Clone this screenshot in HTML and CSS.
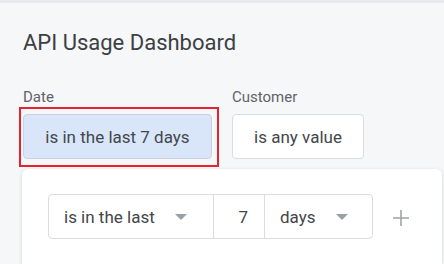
FILE: index.html
```html
<!DOCTYPE html>
<html lang="en">
<head>
    <meta charset="UTF-8">
    <meta name="viewport" content="width=device-width, initial-scale=1.0">
    <title>API Usage Dashboard</title>
    <link rel="stylesheet" href="styles.css">
</head>
<body>
    <div class="topbar"></div>
    <main class="page">
        <h1 class="title">API Usage Dashboard</h1>
        <div class="filters">
            <div class="filter">
                <span class="filter-label">Date</span>
                <button class="chip chip-active">is in the last 7 days</button>
            </div>
            <div class="filter">
                <span class="filter-label">Customer</span>
                <button class="chip">is any value</button>
            </div>
        </div>
        <div class="popup">
            <div class="condition">
                <div class="seg seg-select seg-op">
                    <span>is in the last</span>
                    <span class="caret"></span>
                </div>
                <div class="seg seg-num">7</div>
                <div class="seg seg-select seg-unit">
                    <span>days</span>
                    <span class="caret"></span>
                </div>
            </div>
            <button class="add-btn" aria-label="Add">
                <svg width="16" height="16" viewBox="0 0 16 16">
                    <path d="M8 0v16M0 8h16" stroke="#a0a4a8" stroke-width="1.6" fill="none"/>
                </svg>
            </button>
        </div>
    </main>
</body>
</html>
```

FILE: styles.css
```css
body {
    margin: 0;
    background-color: #f6f7f9;
    font-family: Roboto, "Liberation Sans", Arial, sans-serif;
    color: #3c4043;
    overflow: hidden;
}
.topbar {
    height: 3px;
    background-color: #e8e9ee;
}
.page {
    padding: 27px 0 0 23px;
}
.title {
    margin: 0;
    font-size: 22px;
    line-height: 26px;
    font-weight: 400;
    color: #3c4043;
}
.filters {
    display: flex;
    gap: 20px;
    margin-top: 32px;
}
.filter {
    display: flex;
    flex-direction: column;
    gap: 8px;
}
.filter-label {
    font-size: 15px;
    line-height: 18px;
    color: #5f6368;
}
.chip {
    position: relative;
    height: 45px;
    padding: 0;
    font-family: inherit;
    font-size: 17px;
    color: #43464a;
    background-color: #fff;
    border: 1px solid #dadce0;
    border-radius: 4px;
    width: 132px;
}
.chip-active {
    width: 189px;
    background-color: #d9e6fa;
    border-color: #c8d3e2;
}
/* red highlight frame round the active chip */
.chip-active::after {
    content: "";
    position: absolute;
    top: -8px;
    left: -5px;
    right: -8px;
    bottom: -9px;
    border: 2px solid #e8222c;
}
.popup {
    display: flex;
    align-items: flex-start;
    gap: 20px;
    margin: 10px 0 0 -1px;
    width: 420px;
    height: 95px;
    box-sizing: border-box;
    padding: 25px 0 0 26px;
    background-color: #fff;
    border-radius: 6px 6px 0 0;
    box-shadow: 0 1px 4px rgba(0, 0, 0, 0.14);
}
.condition {
    display: flex;
    height: 45px;
    border: 1px solid #dadce0;
    border-radius: 4px;
    box-sizing: border-box;
}
.seg {
    display: flex;
    align-items: center;
    font-size: 17px;
    color: #43464a;
    box-sizing: border-box;
}
.seg + .seg {
    border-left: 1px solid #dadce0;
}
.seg-op {
    width: 164px;
    padding: 0 26px 0 15px;
    justify-content: space-between;
}
.seg-num {
    width: 51px;
    justify-content: flex-end;
    padding-right: 16px;
}
.seg-unit {
    width: 108px;
    padding: 0 24px 0 15px;
    justify-content: space-between;
}
.caret {
    width: 0;
    height: 0;
    border-left: 6px solid transparent;
    border-right: 6px solid transparent;
    border-top: 6px solid #9aa0a6;
}
.add-btn {
    margin-top: 16px;
    padding: 0;
    border: none;
    background: none;
    display: flex;
}
```
